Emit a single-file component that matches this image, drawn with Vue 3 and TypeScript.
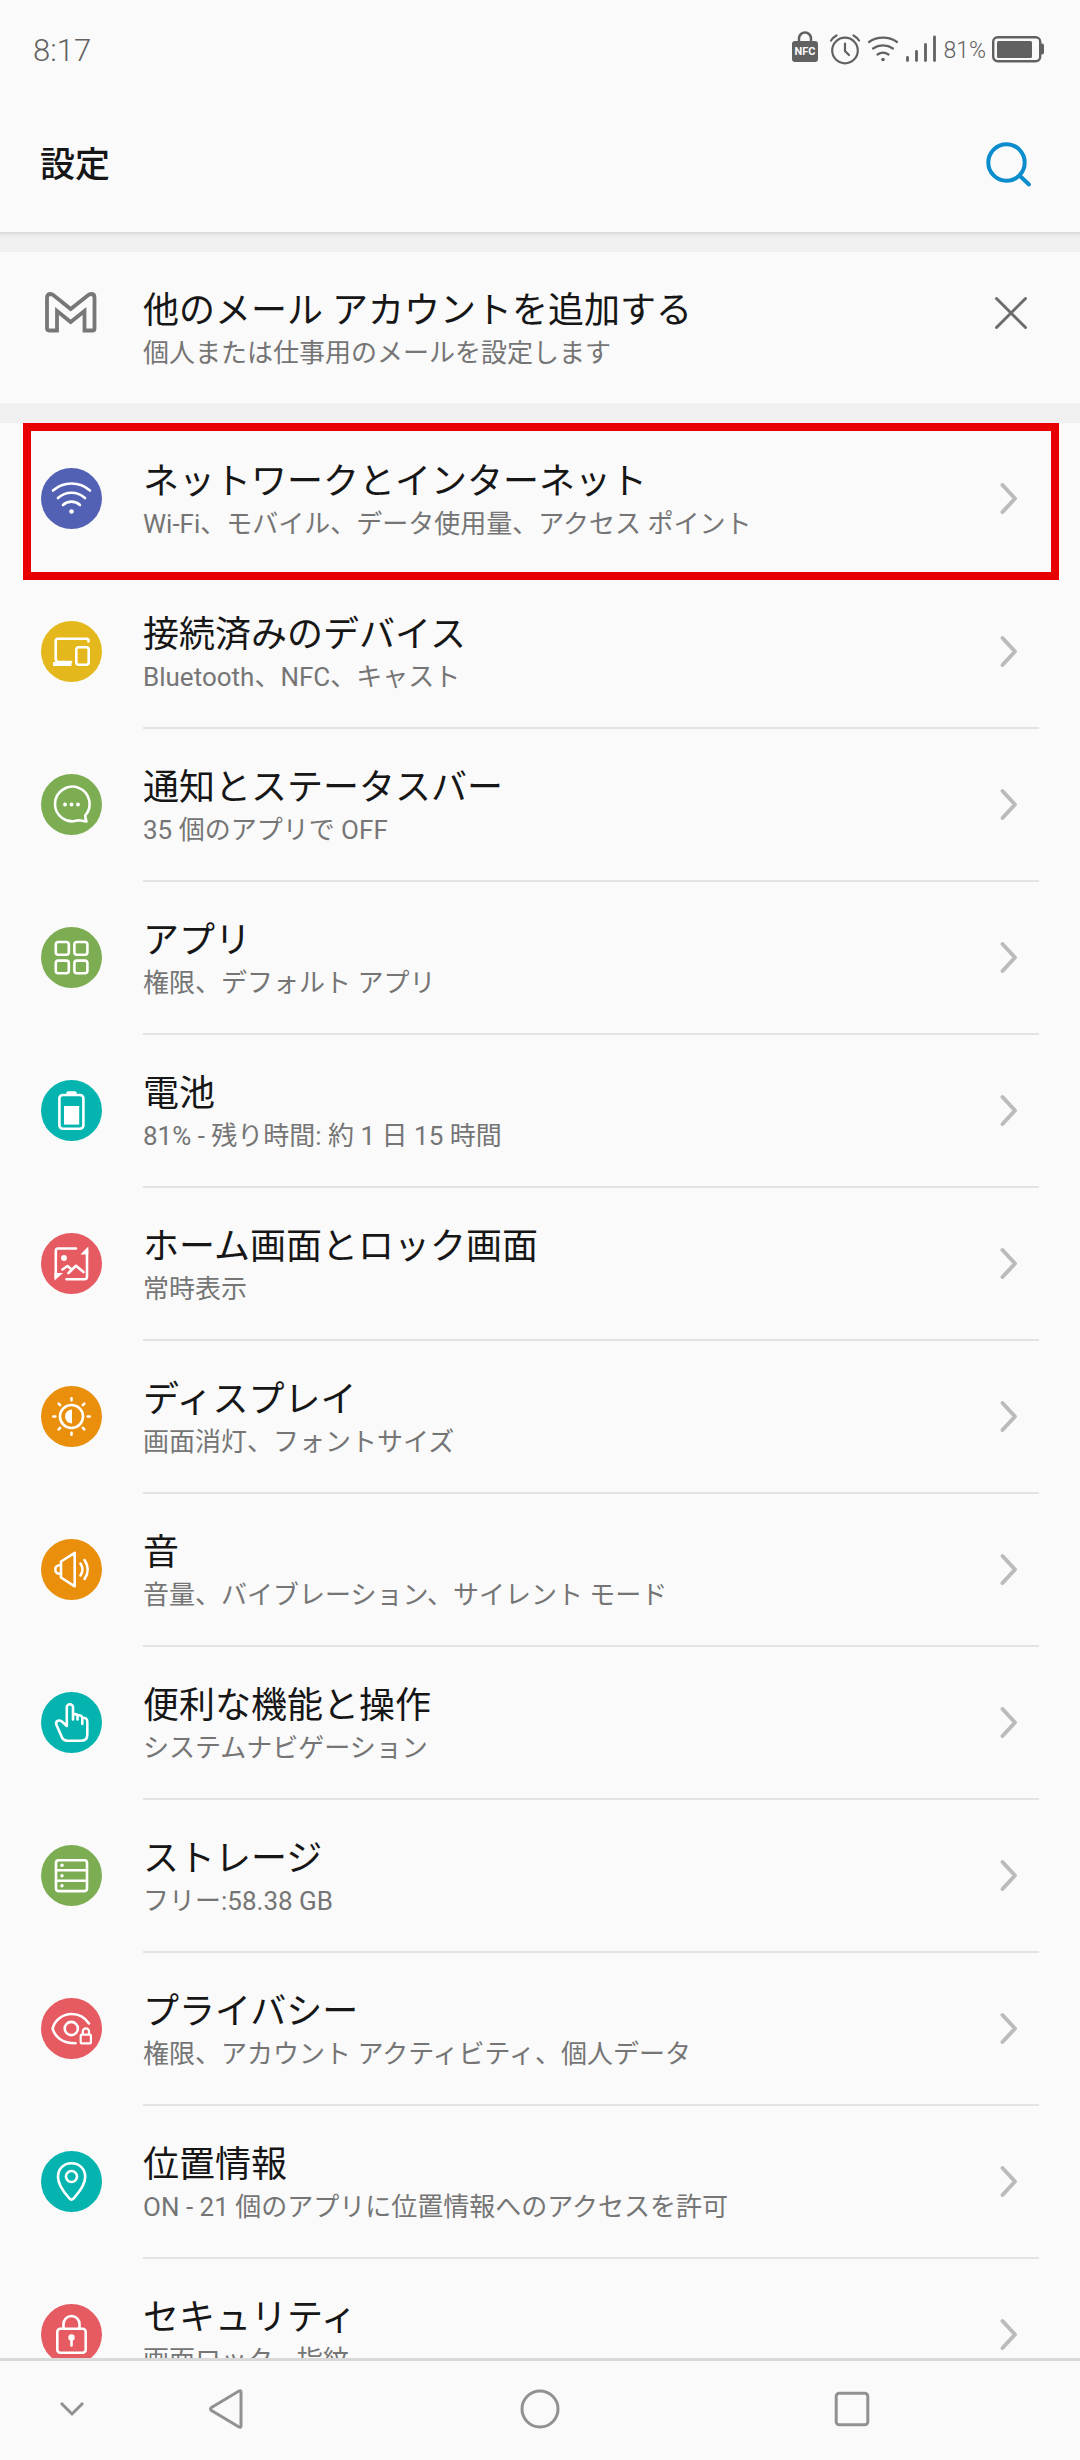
<script setup lang="ts">
interface SettingItem {
  icon: string
  color: string
  title: string
  summary: string
  highlighted?: boolean
}

const items: SettingItem[] = [
  { icon: 'wifi', color: '#5361b4', title: 'ネットワークとインターネット', summary: 'Wi-Fi、モバイル、データ使用量、アクセス ポイント', highlighted: true },
  { icon: 'devices', color: '#e4b81c', title: '接続済みのデバイス', summary: 'Bluetooth、NFC、キャスト' },
  { icon: 'chat', color: '#7cad53', title: '通知とステータスバー', summary: '35 個のアプリで OFF' },
  { icon: 'apps', color: '#7cad53', title: 'アプリ', summary: '権限、デフォルト アプリ' },
  { icon: 'battery', color: '#05b4ae', title: '電池', summary: '81% - 残り時間: 約 1 日 15 時間' },
  { icon: 'picture', color: '#e65a61', title: 'ホーム画面とロック画面', summary: '常時表示' },
  { icon: 'sun', color: '#e98f0b', title: 'ディスプレイ', summary: '画面消灯、フォントサイズ' },
  { icon: 'sound', color: '#e98f0b', title: '音', summary: '音量、バイブレーション、サイレント モード' },
  { icon: 'hand', color: '#05b4ae', title: '便利な機能と操作', summary: 'システムナビゲーション' },
  { icon: 'storage', color: '#7cad53', title: 'ストレージ', summary: 'フリー:58.38 GB' },
  { icon: 'privacy', color: '#e65a61', title: 'プライバシー', summary: '権限、アカウント アクティビティ、個人データ' },
  { icon: 'pin', color: '#05b4ae', title: '位置情報', summary: 'ON - 21 個のアプリに位置情報へのアクセスを許可' },
  { icon: 'lock', color: '#e65a61', title: 'セキュリティ', summary: '画面ロック、指紋' },
]
</script>

<template>
  <div class="screen">
    <div class="status">
      <span class="clock">8:17</span>
      <div class="indicators">
        <svg class="nfc" width="26" height="32" viewBox="0 0 26 32">
          <path d="M7 11V7.500a6 6 0 0 1 12 0V11" fill="none" stroke="#616161" stroke-width="2.500" />
          <rect x="0" y="10" width="26" height="21" rx="3" fill="#616161" />
          <text x="13" y="24" text-anchor="middle" class="nfc-label">NFC</text>
        </svg>
        <svg class="alarm" width="32" height="32" viewBox="0 0 32 32" fill="none" stroke="#616161" stroke-width="2.200" stroke-linecap="round">
          <circle cx="16" cy="17.500" r="12.800" />
          <path d="M16 10.500V18L20 22M2 7.500Q4 4.500 7.500 2.500M30 7.500Q28 4.500 24.500 2.500" />
        </svg>
        <svg class="wifi" width="32" height="32" viewBox="0 0 32 32" fill="none" stroke="#616161" stroke-width="2.200" stroke-linecap="round">
          <path d="M2 9A25 25 0 0 1 30 9M6 15.500A18 18 0 0 1 26 15.500M10.500 21.500A10 10 0 0 1 21.500 21.500" />
          <circle cx="16" cy="26.500" r="1.800" fill="#616161" stroke="none" />
        </svg>
        <svg class="signal" width="32" height="32" viewBox="0 0 32 32" fill="none" stroke="#616161" stroke-width="2.800" stroke-linecap="round">
          <path d="M2.500 24.500V27.500M11.500 18.500V27.500M20.500 11.500V27.500M29.500 4V27.500" />
        </svg>
        <span class="level">81%</span>
        <svg class="cell" width="52" height="32" viewBox="0 0 52 32">
          <rect x="1.200" y="4.200" width="47" height="24" rx="4.500" fill="none" stroke="#616161" stroke-width="2.400" />
          <rect x="5" y="8" width="35" height="17" rx="1.500" fill="#616161" />
          <path d="M49 10.500h1q2 0 2 2v7q0 2-2 2h-1z" fill="#616161" />
        </svg>
      </div>
    </div>

    <header class="header">
      <h1>設定</h1>
      <button type="button" class="search" aria-label="検索">
        <svg width="48" height="48" viewBox="0 0 48 48" fill="none" stroke="#0b8dcd" stroke-width="4" stroke-linecap="round">
          <circle cx="20.500" cy="20.500" r="18.200" />
          <path d="M34 34L43 42.500" />
        </svg>
      </button>
    </header>

    <main class="content">
      <section class="suggestion">
        <svg class="gmail" width="52" height="41" viewBox="0 0 52 41" fill="none" stroke="#777" stroke-width="3.800">
          <path d="M12 38.500H4q-2 0-2-2V5.500Q2 2 5.500 2 7 2 8.500 3.200L25.700 17 43 3.200Q44.500 2 46 2 49.500 2 49.500 5.500V36.500q0 2-2 2H39.500V19L25.700 30 12 19Z" />
        </svg>
        <div class="texts">
          <h2>他のメール アカウントを追加する</h2>
          <p>個人または仕事用のメールを設定します</p>
        </div>
        <button type="button" class="close" aria-label="閉じる">
          <svg width="34" height="34" viewBox="0 0 34 34" fill="none" stroke="#6c6c6c" stroke-width="3" stroke-linecap="round">
            <path d="M2.500 2.500L31.500 31.500M31.500 2.500L2.500 31.500" />
          </svg>
        </button>
      </section>

      <nav class="list">
        <a v-for="item in items" :key="item.icon" href="#" class="row" :class="{ highlighted: item.highlighted }">
          <svg class="icon" width="61" height="61" viewBox="0 0 61 61" fill="none" stroke="#fff" stroke-width="2.600" stroke-linecap="round" stroke-linejoin="round">
            <circle cx="30.500" cy="30.500" r="30.500" :fill="item.color" stroke="none" />
            <template v-if="item.icon === 'wifi'">
              <path d="M12 22.500A28 28 0 0 1 49 22.500M17 30A20 20 0 0 1 44 30M22 37A12.500 12.500 0 0 1 39 37" />
              <circle cx="30.500" cy="43.500" r="2.300" fill="#fff" stroke="none" />
            </template>
            <template v-else-if="item.icon === 'devices'">
              <path d="M47.500 20.500V19.500Q47.500 17.700 45.500 17.700H17Q14.700 17.700 14.700 20V37.500Q14.700 41 18 41H30" />
              <path d="M12 41H30.500V45H12Z" fill="#fff" stroke="none" />
              <rect x="35.300" y="26.300" width="12.400" height="17.400" rx="2.500" />
            </template>
            <template v-else-if="item.icon === 'chat'">
              <path d="M44.200 41.500A17.300 17.300 0 1 0 37 46.300Q41 46.500 45.500 47.500Q44.300 44.500 44.200 41.500Z" />
              <g fill="#fff" stroke="none">
                <circle cx="24" cy="30.500" r="1.900" />
                <circle cx="30.500" cy="30.500" r="1.900" />
                <circle cx="37" cy="30.500" r="1.900" />
              </g>
            </template>
            <template v-else-if="item.icon === 'apps'">
              <rect x="14.800" y="15" width="13" height="12.700" rx="2.500" />
              <rect x="33.400" y="15" width="13" height="12.700" rx="2.500" />
              <rect x="14.800" y="33.600" width="13" height="12.700" rx="2.500" />
              <rect x="33.400" y="33.600" width="13" height="12.700" rx="2.500" />
            </template>
            <template v-else-if="item.icon === 'battery'">
              <rect x="18.400" y="15" width="24" height="33.800" rx="3.500" />
              <path d="M27 13H34" stroke-width="3.500" />
              <rect x="23" y="26" width="15.200" height="18.600" fill="#fff" stroke="none" />
            </template>
            <template v-else-if="item.icon === 'picture'">
              <path d="M35 15.500H17Q14.800 15.500 14.800 18V44M46 17V43.500Q46 46.300 43.500 46.300H25.500" />
              <path d="M13.500 47.500V40H22ZM47.300 13.500V21.500H39.500Z" fill="#fff" stroke="none" />
              <circle cx="23" cy="25" r="2.900" fill="#fff" stroke="none" />
              <path d="M21.500 36.500L26.500 33L29.500 35.500M27.500 40L35 32.800L42.500 39" />
            </template>
            <template v-else-if="item.icon === 'sun'">
              <circle cx="30.500" cy="30.500" r="11.500" />
              <path d="M31 23.500A7 7 0 0 0 31 37.500Z" fill="#fff" stroke="none" />
              <path d="M30.500 12.300V14.300M30.500 46.700V48.700M12.300 30.500H14.300M46.700 30.500H48.700M17.700 17.700L19.100 19.100M41.900 41.900L43.300 43.300M17.700 43.300L19.100 41.900M41.900 19.100L43.300 17.700" />
            </template>
            <template v-else-if="item.icon === 'sound'">
              <path d="M20 22.500L33.700 13.800V47.300L20 38.500ZM20 26.300H18.500A4.200 4.200 0 0 0 18.500 34.700H20M39.500 24.500Q43.500 30.500 39.500 36.500M43.500 21Q50 30.500 43.500 40" />
            </template>
            <template v-else-if="item.icon === 'hand'">
              <path d="M25.800 34V15.300A3.100 3.100 0 0 1 32 15.300V27.500M32 22.500Q34.500 21.500 36.500 23V27.500M36.500 23.500Q40 22.500 41.300 25.500V32M41.300 25.700Q46.300 25.500 46.300 29.500V42.500Q46.300 48.700 40.500 48.700H26.500Q22.500 48.700 21 45.500L15.300 32.500Q14.500 29.500 17 28.700Q19.500 28 21.500 30L25.800 34" />
            </template>
            <template v-else-if="item.icon === 'storage'">
              <rect x="15" y="15.300" width="31" height="30.800" rx="2.500" />
              <path d="M15 25.300H46M15 35.800H46" />
              <g fill="#fff" stroke="none">
                <circle cx="21" cy="20.300" r="1.700" />
                <circle cx="21" cy="30.700" r="1.700" />
                <circle cx="21" cy="40.800" r="1.700" />
              </g>
            </template>
            <template v-else-if="item.icon === 'privacy'">
              <path d="M48 25.500C43.500 19 37.500 16 31 16C20.500 16 13.500 23 11.600 30.500C13.500 38 20.500 45.300 34.500 45.300" />
              <circle cx="30.300" cy="30.500" r="6.600" />
              <rect x="39.700" y="36.600" width="10.200" height="8.800" rx="1" stroke-width="2.200" />
              <path d="M41.800 36V33.500A3.100 3.100 0 0 1 48 33.500V36" stroke-width="2.200" />
            </template>
            <template v-else-if="item.icon === 'pin'">
              <path d="M30.500 12.300C22.500 12.300 17 18 17 26C17 35 25 43.500 28.500 47.500Q30.500 49.500 32.500 47.500C36 43.500 44.200 35 44.200 26C44.200 18 38.500 12.300 30.500 12.300Z" />
              <circle cx="30.500" cy="25.500" r="5.500" />
            </template>
            <template v-else>
              <rect x="16.300" y="24.700" width="28.400" height="24" rx="3" />
              <path d="M22.500 24.500V20A8 8 0 0 1 38.500 20V24.500" />
              <circle cx="30.500" cy="33.500" r="3.200" fill="#fff" stroke="none" />
              <path d="M30.500 35V41.500" />
            </template>
          </svg>
          <div class="texts">
            <h2>{{ item.title }}</h2>
            <p>{{ item.summary }}</p>
          </div>
          <svg class="chevron" width="20" height="34" viewBox="0 0 20 34" fill="none" stroke="#bbb" stroke-width="4" stroke-linecap="round" stroke-linejoin="round">
            <path d="M3.500 3L16 16.500L3.500 30" />
          </svg>
        </a>
      </nav>
    </main>

    <footer class="navbar">
      <button type="button" aria-label="隠す">
        <svg width="28" height="18" viewBox="0 0 28 18"><path d="M3 3L14 14L25 3" /></svg>
      </button>
      <button type="button" aria-label="戻る">
        <svg width="40" height="44" viewBox="0 0 40 44"><path d="M33 5V39Q33 41 31 40L3.500 23.500Q1.500 22 3.500 20.500L31 4Q33 3 33 5Z" /></svg>
      </button>
      <button type="button" aria-label="ホーム">
        <svg width="40" height="40" viewBox="0 0 40 40"><circle cx="20" cy="20" r="18" /></svg>
      </button>
      <button type="button" aria-label="履歴">
        <svg width="36" height="36" viewBox="0 0 36 36"><rect x="2.200" y="2.200" width="31.600" height="31.600" rx="3" /></svg>
      </button>
    </footer>
  </div>
</template>

<style>
body {
  margin: 0;
  background: #fafafa;
}
</style>

<style scoped>
.screen {
  display: flex;
  flex-direction: column;
  height: 100vh;
  background: #fafafa;
  color: #161616;
  font-family: Roboto, "Noto Sans CJK JP", sans-serif;
}

button {
  display: grid;
  place-items: center;
  padding: 0;
  border: 0;
  background: none;
}

h1,
h2,
p {
  margin: 0;
}

svg {
  display: block;
  flex: none;
}

.status {
  display: flex;
  align-items: center;
  justify-content: space-between;
  box-sizing: border-box;
  height: 100px;
  padding: 0 36px 0 33px;
  color: #616161;
}

.clock {
  padding-top: 2px;
  font-size: 31px;
  font-weight: 300;
  line-height: 36px;
}

.indicators {
  display: flex;
  align-items: center;
  gap: 6px;
  padding-bottom: 2px;
}

.nfc {
  margin: 0 5px 4px 0;
}

.level {
  padding-top: 4px;
  font-size: 23px;
  font-weight: 300;
  line-height: 32px;
}

.nfc-label {
  font: 700 11px Roboto, sans-serif;
  fill: #fafafa;
}

.header {
  display: flex;
  align-items: center;
  justify-content: space-between;
  box-sizing: border-box;
  height: 132px;
  padding: 0 46px 0 40px;
}

h1 {
  font-size: 35px;
  font-weight: 500;
  line-height: 48px;
}

.content {
  flex: 1;
  min-height: 0;
  overflow: hidden;
  background: linear-gradient(#d6d6d6, #eaeaea 3px, #f0f0f0 7px);
  padding-top: 20px;
}

.suggestion,
.row {
  display: flex;
  align-items: center;
  box-sizing: border-box;
  padding-left: 41px;
  background: #fafafa;
}

.suggestion {
  height: 151px;
  margin-bottom: 20px;
  padding-right: 52px;
}

.gmail {
  margin: 0 46px 31px 4px;
}

.close {
  margin-bottom: 30px;
}

.texts {
  flex: 1;
  padding-top: 6px;
}

h2 {
  font-size: 36px;
  font-weight: 400;
  line-height: 45px;
}

p {
  color: #757575;
  font-size: 26px;
  line-height: 38px;
}

.row {
  position: relative;
  height: 153px;
  padding-right: 61px;
  padding-bottom: 2px;
  color: inherit;
  text-decoration: none;
}

.row::after {
  position: absolute;
  right: 41px;
  bottom: 0;
  left: 143px;
  height: 2px;
  background: #e3e3e3;
  content: "";
}

.row.highlighted {
  z-index: 1;
}

.row.highlighted::after {
  top: 0;
  right: 21px;
  bottom: -4px;
  left: 23px;
  height: auto;
  border: 8px solid #e80000;
  background: none;
}

.icon {
  margin-right: 41px;
}

.navbar {
  display: grid;
  grid-template-columns: 144fr 168fr 456fr 168fr 144fr;
  flex: none;
  align-items: center;
  box-sizing: border-box;
  height: 102px;
  padding-bottom: 3px;
  border-top: 3px solid #d9d9d9;
}

.navbar svg {
  fill: none;
  stroke: #919191;
  stroke-width: 3;
}
</style>
